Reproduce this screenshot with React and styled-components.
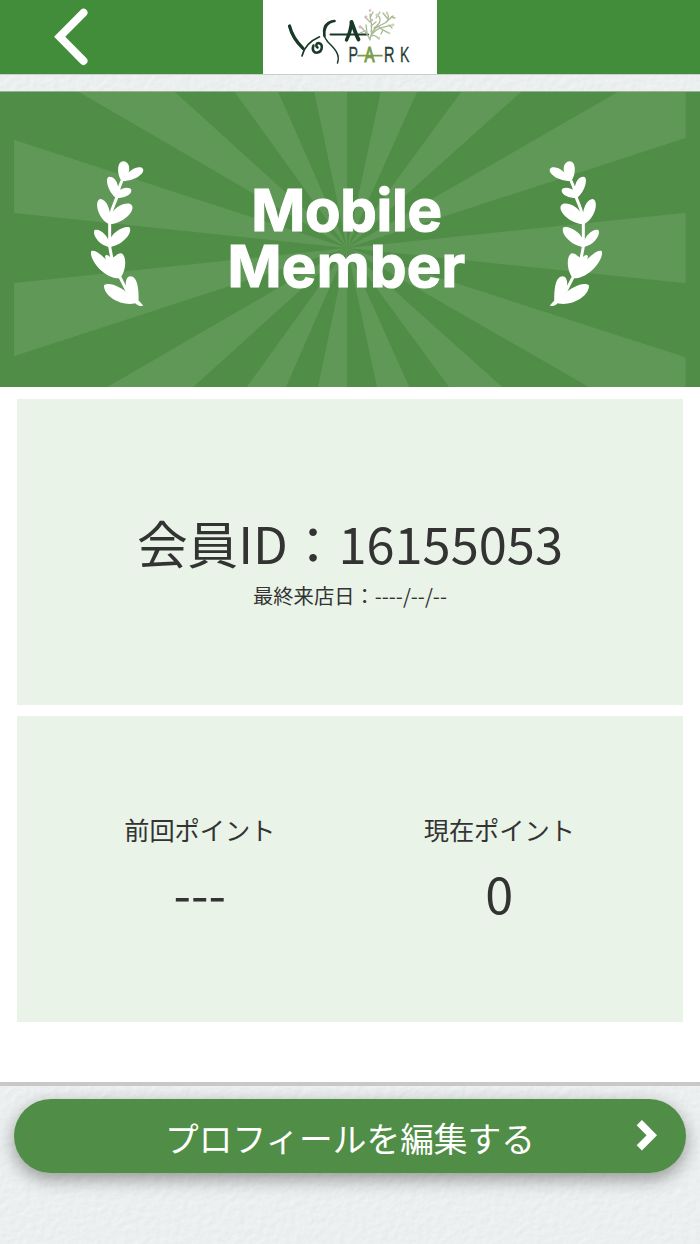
import React from "react";
import styled, { createGlobalStyle } from "styled-components";

const GlobalStyle = createGlobalStyle`
  *, *::before, *::after { box-sizing: border-box; }
  body {
    margin: 0;
    background: #fff;
    color: #333;
    font-family: "Noto Sans CJK JP", "Noto Sans", sans-serif;
  }
`;

const Screen = styled.div`
  width: 700px;
  height: 1244px;
  display: flex;
  flex-direction: column;
  overflow: hidden;
  background: #fff;
`;

const Header = styled.header`
  flex: none;
  height: 75px;
  display: grid;
  grid-template-columns: 263px 174px 263px;
  background: #428d39;
  border-bottom: 1px solid #c9cfca;
`;

const BackButton = styled.button`
  display: flex;
  justify-content: flex-start;
  padding: 0;
  border: 0;
  background: none;
`;

const LogoPlate = styled.div`
  background: #fff;
`;

const Drawing = styled.svg`
  display: block;
  flex: none;
`;

const Paper = styled.div`
  position: relative;
  isolation: isolate;
  flex: ${(p) => (p.$fill ? "1" : "none")};
  height: ${(p) => p.$height || "auto"};
  padding: ${(p) => p.$padding || 0};
  border-top: ${(p) => p.$line || "none"};
  background: #e9ecec;
  overflow: hidden;
`;

const Grain = styled.svg`
  position: absolute;
  inset: 0;
  z-index: -1;
  width: 100%;
  height: 100%;
`;

const Banner = styled.section`
  position: relative;
  isolation: isolate;
  flex: none;
  height: 296px;
  padding: 58px 87px 0 80px;
  display: flex;
  justify-content: space-between;
  align-items: flex-start;
  border-top: 1px solid #93b68e;
  background: #508d46;
`;

const Rays = styled.svg`
  position: absolute;
  inset: 0;
  z-index: -1;
`;

const Branch = styled(Drawing)`
  transform: ${(p) => (p.$mirrored ? "scaleX(-1)" : "none")};
`;

const BannerTitle = styled.h1`
  margin: 32px 0 0;
  display: flex;
  flex-direction: column;
  align-items: center;
  color: #fff;
  font: 700 58px/56px Inter, "Liberation Sans", sans-serif;
  -webkit-text-stroke: 1.2px #fff;
`;

const TitleLine = styled.span`
  letter-spacing: ${(p) => p.$spacing};
  white-space: nowrap;
`;

const Main = styled.main`
  flex: none;
  height: 695px;
  padding: 12px 17px 0;
  display: flex;
  flex-direction: column;
  gap: 11px;
`;

const Card = styled.section`
  height: 306px;
  background: #e9f3e8;
  display: flex;
  flex-direction: ${(p) => (p.$row ? "row" : "column")};
  align-items: ${(p) => (p.$row ? "flex-start" : "center")};
  padding-top: ${(p) => p.$top};
`;

const MemberId = styled.p`
  margin: 0;
  font-size: 50.6px;
  line-height: 60px;
  white-space: nowrap;
`;

const LastVisit = styled.p`
  margin: 8px 0 0;
  font-size: 20.3px;
  line-height: 30px;
`;

const PointColumn = styled.div`
  flex: 1;
  display: flex;
  flex-direction: column;
  align-items: center;
  padding: ${(p) => p.$pad};
`;

const PointLabel = styled.span`
  font-size: 25.2px;
  line-height: 36px;
`;

const PointValue = styled.span`
  margin-top: 16px;
  font-size: 50.4px;
  line-height: 60px;
`;

const EditButton = styled.button`
  width: 100%;
  height: 74px;
  display: grid;
  grid-template-columns: 60px 1fr 60px;
  align-items: center;
  padding: 0;
  border: 0;
  border-radius: 37px;
  background: #508d46;
  box-shadow: 0 6px 18px rgba(0, 0, 0, 0.38);
  color: #fff;
  font: 400 33.7px/48px "Noto Sans CJK JP", "Noto Sans", sans-serif;
`;

const EditLabel = styled.span`
  padding-top: 3px;
  text-align: center;
  white-space: nowrap;
`;

function PaperGrain({ id }) {
  return (
    <Grain aria-hidden="true">
      <filter id={id} x="0" y="0" width="100%" height="100%" colorInterpolationFilters="sRGB">
        <feTurbulence type="fractalNoise" baseFrequency="0.14 0.17" numOctaves="2" seed="4" />
        <feDiffuseLighting surfaceScale="0.17" diffuseConstant="1.07" lightingColor="#eef1f1">
          <feDistantLight azimuth="225" elevation="68" />
        </feDiffuseLighting>
      </filter>
      <rect width="100%" height="100%" filter={`url(#${id})`} />
    </Grain>
  );
}

function Sunburst() {
  return (
    <Rays width="700" height="295" viewBox="0 0 700 295" fill="#609857" aria-hidden="true">
      <path d="M347 156L14 47.700V121ZM347 156L14 191V264.300ZM347 156L78.700 0H175ZM347 156L234.700 0H278.300ZM347 156L314.300 0H347ZM347 156L380.700 0H417ZM347 156L461 0H521ZM347 156L617.700 0H685.700V46ZM347 156L685.700 120.700V191.300ZM347 156L685.700 265.300V295H588.700ZM347 156L502.300 295H449ZM347 156L409.300 295H377ZM347 156V295H318ZM347 156L286 295H246.700ZM347 156L193.300 295H107.300Z" />
    </Rays>
  );
}

function Laurel({ mirrored }) {
  return (
    <Branch $mirrored={mirrored} width="75" height="165" viewBox="0 0 225 495" fill="#fff" aria-hidden="true">
      <path d="M126 94C112 79 108 35 130 34C151 35 154 66 137 82C146 60 168 49 182 52C204 59 178 92 126 94Z" />
      <path d="M110 144C88 133 71 83 88 80C107 78 117 107 115 124C125 112 151 109 154 120C156 137 125 145 110 144Z" />
      <path d="M88 223C50 204 42 148 62 147C81 148 92 184 91 202C96 176 126 158 149 161C175 170 139 219 88 223Z" />
      <path d="M88 291C54 285 36 251 44 240C62 235 83 259 88 276C92 248 133 226 148 232C161 248 125 289 88 291Z" />
      <path d="M119 385C67 386 25 322 34 303C48 297 67 318 78 329C69 311 85 312 91 322C99 329 108 310 124 310C143 319 137 369 119 385Z" />
      <path d="M176 457C134 475 70 442 72 406C88 394 125 413 142 429C135 410 134 380 151 379C172 380 177 414 176 457Z" />
      <path d="M126 92C116 112 115 123 111 140C101 170 90 181 89 222V290L97 332M119 380L143 427" fill="none" stroke="#fff" strokeWidth="9" />
      <path d="M166 461L177 452L190 467L179 468Z" />
    </Branch>
  );
}

function YosaLogo() {
  return (
    <Drawing width="174" height="74" viewBox="0 0 174 74" fill="none" strokeLinecap="round" role="img" aria-label="YOSA PARK">
      <g stroke="#183828">
        <path d="M26.500 26C28.500 34 33.500 42 40 48.300" strokeWidth="3.200" />
        <path d="M56.500 36.800C47 41 41 47 39 56" strokeWidth="1.600" />
        <path d="M50.500 45.500C48.500 50 51 53.300 54.500 52.600C59.500 51.500 60.500 44 55.500 43C53 43.300 52.500 46 54.500 47.500" strokeWidth="2.500" />
        <path d="M71.500 21C60 21 57.500 33 64.500 41.500C69 46.500 78 53 74.500 63" strokeWidth="1.500" />
        <path d="M71.500 21C64.500 21.500 60.500 28 61.500 36" strokeWidth="2.500" />
        <path d="M67.500 34.400H105" strokeWidth="2" />
        <path d="M83.500 40C86 35 88 28 88.500 22" strokeWidth="3.400" />
        <path d="M88.500 22C91 28 92.500 34 95.500 39.500" strokeWidth="3.800" />
      </g>
      <g stroke="#a8ba94" strokeWidth="1.300">
        <path d="M107 40C108 30 113 27 122 23C126 21 126 16 124 13M107 40C104 32 101 30 97 26M108 32C110 25 107 20 107 14M111 28C119 23 118 17 114 15M109 34C115 27 122 27 129 25M116 27C119 30 122 31 126 33M122 23L130 16M124 18L120 13M109 36C111 34 114 37 116 39M107 22L102 17M108 26L113 22M102 31L97 33M104 33L103 25M126 25L129 28M113 18L117 12M120 30L118 34M107 18L110 12M128 17L132 18" />
      </g>
      <g fill="#c9d6b8">
        <circle cx="114" cy="15" r="1.600" /><circle cx="124" cy="13" r="1.400" /><circle cx="130" cy="25" r="1.400" /><circle cx="126" cy="33" r="1.300" /><circle cx="116" cy="38" r="1.300" />
      </g>
      <g fill="#dfb2cd">
        <circle cx="107" cy="10.500" r="1.300" /><circle cx="103" cy="17" r="1.400" /><circle cx="97" cy="27" r="1.500" /><circle cx="109" cy="20" r="1.200" /><circle cx="102" cy="31" r="1.100" />
      </g>
      <g fontFamily="Liberation Sans, Arial, sans-serif" fontSize="21.500" fill="#263e36" stroke="#263e36" strokeWidth="0.300">
        <text x="85.500" y="62" textLength="9.500" lengthAdjust="spacingAndGlyphs">P</text>
        <text x="101.500" y="62" textLength="10" lengthAdjust="spacingAndGlyphs" fill="#7b9e48" stroke="#7b9e48" strokeWidth="1.200">A</text>
        <text x="121" y="62" textLength="10.500" lengthAdjust="spacingAndGlyphs">R</text>
        <text x="137" y="62" textLength="9.500" lengthAdjust="spacingAndGlyphs">K</text>
      </g>
      <path d="M95 55.700H119" stroke="#7b9e48" strokeWidth="1.700" />
    </Drawing>
  );
}

export default function App() {
  return (
    <Screen>
      <GlobalStyle />
      <Header>
        <BackButton aria-label="戻る">
          <Drawing width="100" height="74" viewBox="0 0 100 74" fill="none">
            <path d="M83.500 12.700L59.700 36.800L83.500 60.900" stroke="#fff" strokeWidth="8" strokeLinecap="round" />
          </Drawing>
        </BackButton>
        <LogoPlate>
          <YosaLogo />
        </LogoPlate>
      </Header>
      <Paper $height="16px">
        <PaperGrain id="grain-top" />
      </Paper>
      <Banner>
        <Sunburst />
        <Laurel />
        <BannerTitle>
          <TitleLine $spacing="-0.3px">Mobile</TitleLine>
          <TitleLine $spacing="0.3px">Member</TitleLine>
        </BannerTitle>
        <Laurel mirrored />
      </Banner>
      <Main>
        <Card $top="113px">
          <MemberId>会員ID：16155053</MemberId>
          <LastVisit>最終来店日：----/--/--</LastVisit>
        </Card>
        <Card $row $top="95px">
          <PointColumn $pad="0 0 0 33px">
            <PointLabel>前回ポイント</PointLabel>
            <PointValue>---</PointValue>
          </PointColumn>
          <PointColumn $pad="0 34px 0 0">
            <PointLabel>現在ポイント</PointLabel>
            <PointValue>0</PointValue>
          </PointColumn>
        </Card>
      </Main>
      <Paper $fill $line="4px solid #c8c8c8" $padding="13px 14px 0">
        <PaperGrain id="grain-bottom" />
        <EditButton>
          <span />
          <EditLabel>プロフィールを編集する</EditLabel>
          <Drawing width="60" height="74" viewBox="0 0 60 74" fill="none">
            <path d="M13.300 23.700L25.800 36.300L13.300 48.900" stroke="#fff" strokeWidth="7.400" />
          </Drawing>
        </EditButton>
      </Paper>
    </Screen>
  );
}
